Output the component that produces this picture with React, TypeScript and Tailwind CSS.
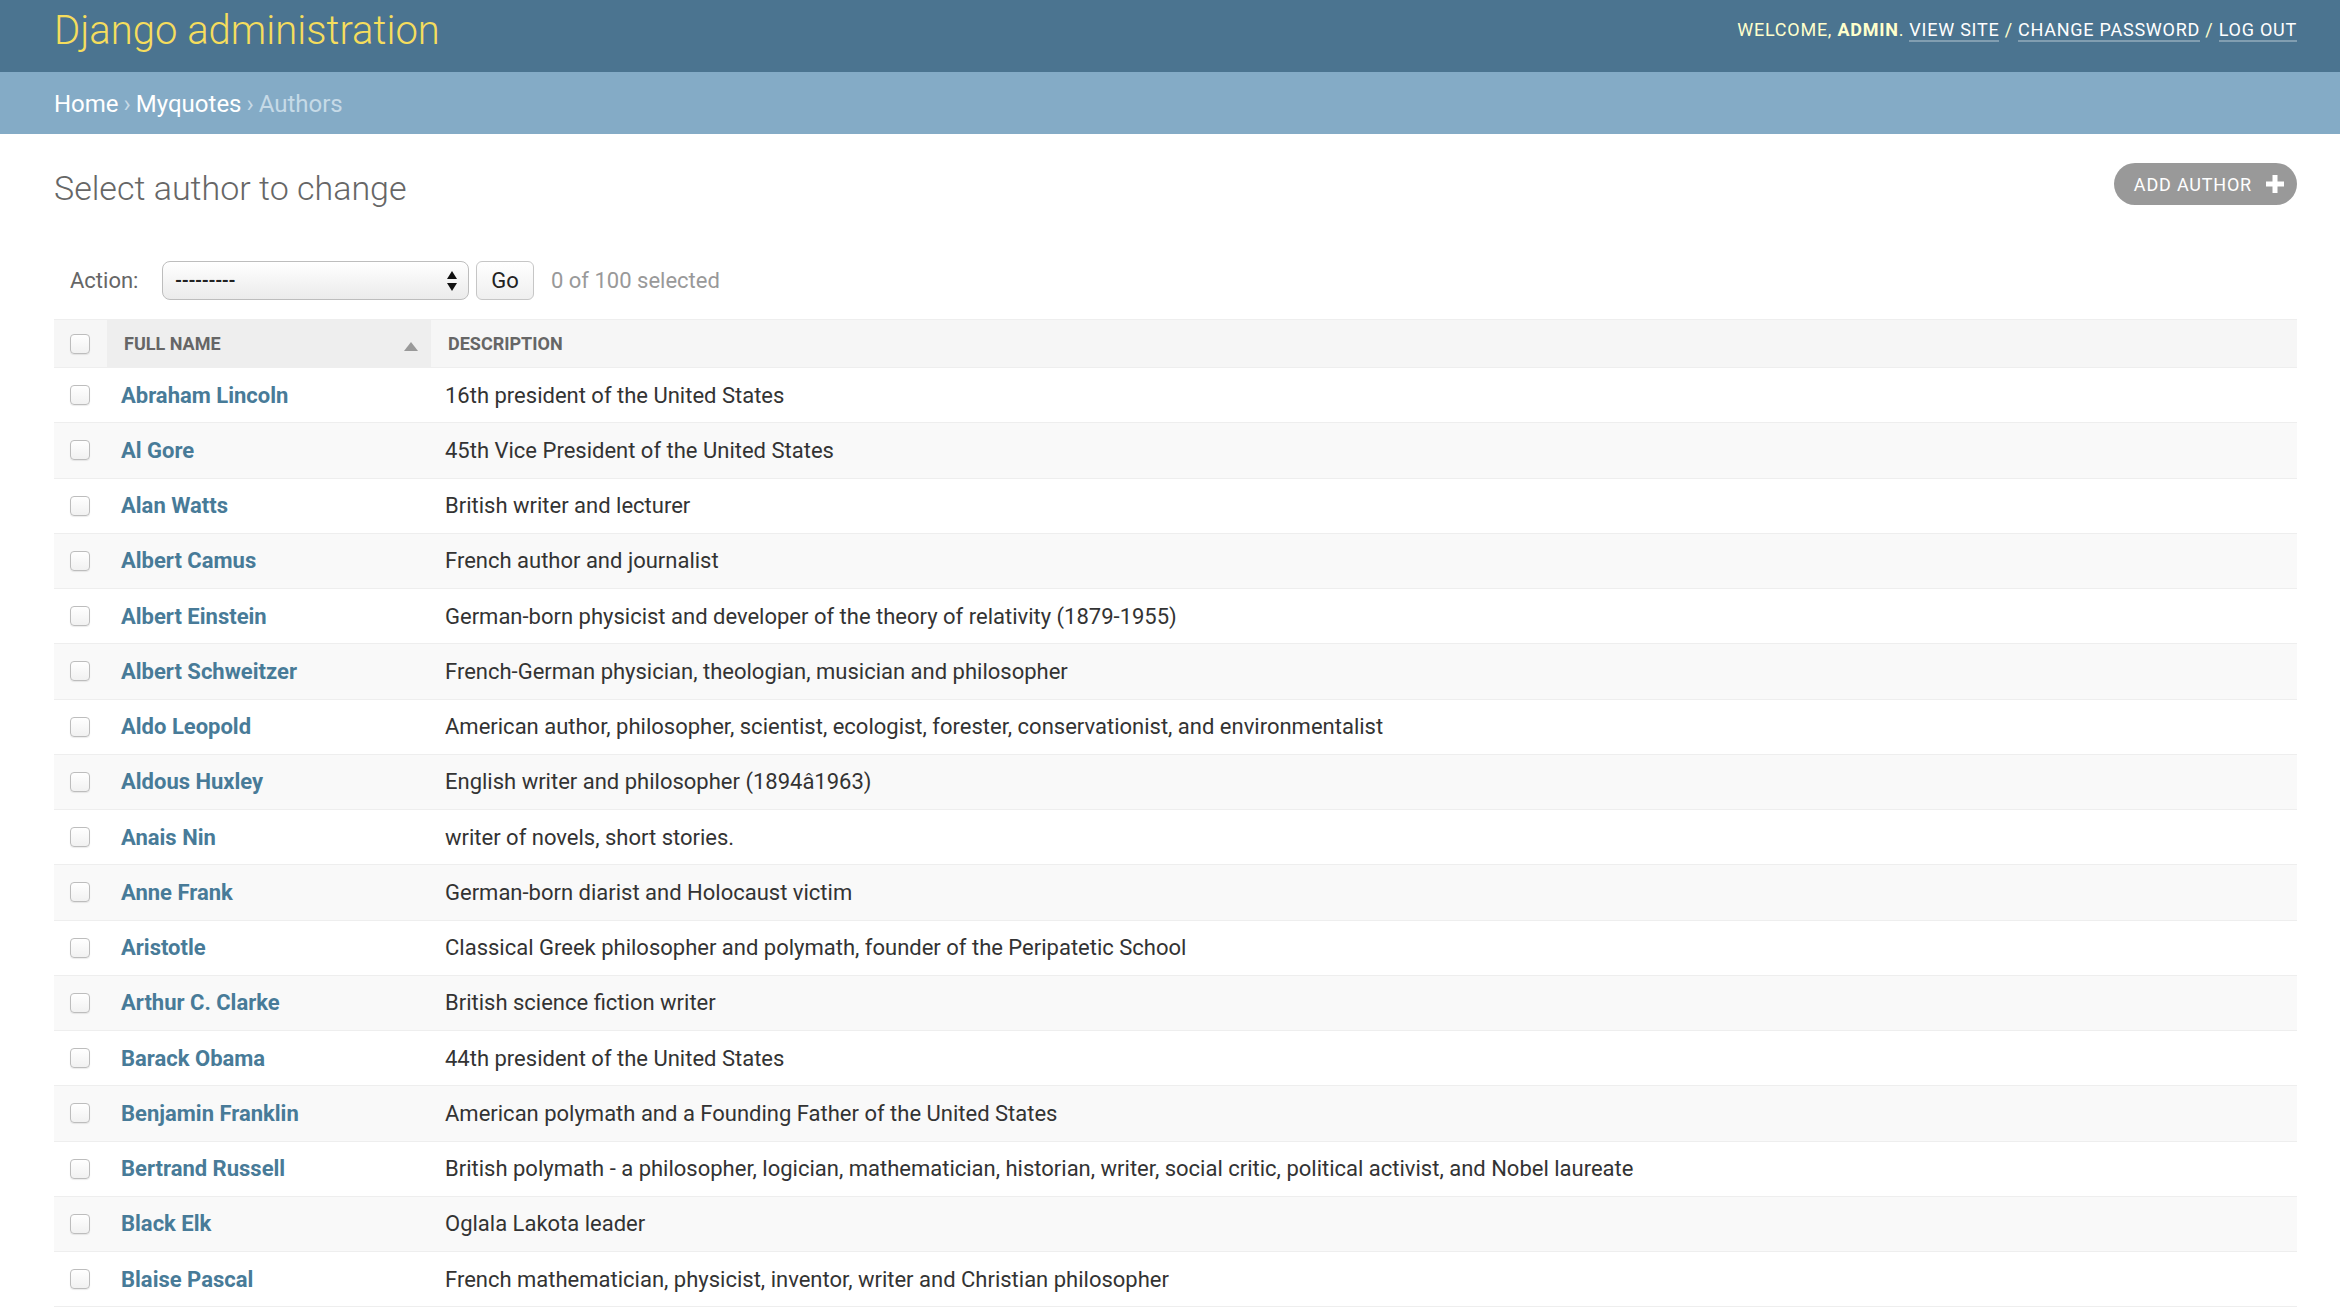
import React from 'react';

const authors: [string, string][] = [
  ['Abraham Lincoln', '16th president of the United States'],
  ['Al Gore', '45th Vice President of the United States'],
  ['Alan Watts', 'British writer and lecturer'],
  ['Albert Camus', 'French author and journalist'],
  ['Albert Einstein', 'German-born physicist and developer of the theory of relativity (1879-1955)'],
  ['Albert Schweitzer', 'French-German physician, theologian, musician and philosopher'],
  ['Aldo Leopold', 'American author, philosopher, scientist, ecologist, forester, conservationist, and environmentalist'],
  ['Aldous Huxley', 'English writer and philosopher (1894â1963)'],
  ['Anais Nin', 'writer of novels, short stories.'],
  ['Anne Frank', 'German-born diarist and Holocaust victim'],
  ['Aristotle', 'Classical Greek philosopher and polymath, founder of the Peripatetic School'],
  ['Arthur C. Clarke', 'British science fiction writer'],
  ['Barack Obama', '44th president of the United States'],
  ['Benjamin Franklin', 'American polymath and a Founding Father of the United States'],
  ['Bertrand Russell', 'British polymath - a philosopher, logician, mathematician, historian, writer, social critic, political activist, and Nobel laureate'],
  ['Black Elk', 'Oglala Lakota leader'],
  ['Blaise Pascal', 'French mathematician, physicist, inventor, writer and Christian philosopher'],
];

const Checkbox: React.FC = () => (
  <div className="w-[20px] h-[20px] rounded-[4px] border border-[#bdbdbd] bg-linear-to-b from-white to-[#f1f1f1] shadow-[0_1px_1px_rgba(0,0,0,0.08)]" />
);

const App: React.FC = () => {
  return (
    <div className="h-[1312px] overflow-hidden bg-white text-[#333]" style={{ fontFamily: 'Roboto, "Liberation Sans", sans-serif' }}>
      {/* header */}
      <div className="h-[72px] bg-[#4b7490] pl-[54px] pr-[43px] flex justify-between items-start">
        <h1 className="mt-[11px] text-[40px] leading-[40px] font-light text-[#f5dd5d]">Django administration</h1>
        <div className="mt-[18px] text-[18px] leading-[24px] uppercase tracking-[0.75px] text-[#ffc]">
          Welcome, <strong className="font-bold">admin</strong>.{' '}
          <a className="text-white border-b-[2px] border-white/30">View site</a> /{' '}
          <a className="text-white border-b-[2px] border-white/30">Change password</a> /{' '}
          <a className="text-white border-b-[2px] border-white/30">Log out</a>
        </div>
      </div>

      {/* breadcrumbs */}
      <div className="h-[62px] bg-[#84abc6] pl-[54px] pt-[2px] flex items-center text-[24px] text-[#c6dae7]">
        <a className="text-white">Home</a>
        <span className="mx-[5px]">›</span>
        <a className="text-white">Myquotes</a>
        <span className="mx-[5px]">›</span>
        <span>Authors</span>
      </div>

      {/* content */}
      <div className="pl-[54px] pr-[43px] pt-[29px]">
        <div className="flex justify-between items-start">
          <h2 className="mt-[5px] text-[34px] leading-[40px] font-light text-[#666]">Select author to change</h2>
          <a className="h-[42px] pl-[20px] pr-[13px] rounded-full bg-[#999] text-white flex items-center gap-[14px] text-[18px] uppercase tracking-[0.8px]">
            Add author
            <svg width="18" height="18" viewBox="0 0 18 18">
              <path d="M6.5 0h5v6.5H18v5h-6.5V18h-5v-6.5H0v-5h6.5z" fill="#fff" />
            </svg>
          </a>
        </div>

        {/* actions */}
        <div className="mt-[53px] h-[39px] flex items-center text-[22px]">
          <label className="w-[108px] pl-[16px] text-[#666]">Action:</label>
          <div className="w-[307px] h-[39px] rounded-[8px] border border-[#bdbdbd] bg-linear-to-b from-white to-[#ebebeb] shadow-[inset_0_1px_0_#fff] flex items-center justify-between pl-[12px] pr-[10px]">
            <span className="text-[18px] font-bold tracking-[-0.4px] text-[#222] leading-none">---------</span>
            <svg width="12" height="22" viewBox="0 0 12 22">
              <path d="M6 1l5 8H1z" fill="#111" />
              <path d="M6 21l5-8H1z" fill="#111" />
            </svg>
          </div>
          <button className="ml-[7px] w-[58px] h-[39px] rounded-[6px] border border-[#c6c6c6] bg-linear-to-b from-white to-[#efefef] text-[22px] text-[#222]">
            Go
          </button>
          <span className="ml-[17px] text-[#999]">0 of 100 selected</span>
        </div>

        {/* table */}
        <div className="mt-[19px]">
          <div className="h-[49px] grid grid-cols-[53px_324px_1fr] bg-[#f6f6f6] border-t border-b border-[#eee] text-[18px] font-bold uppercase text-[#666]">
            <div className="flex items-center pl-[16px]">
              <Checkbox />
            </div>
            <div className="bg-[#eee] flex items-center justify-between pl-[17px] pr-[13px]">
              <span>Full name</span>
              <svg width="14" height="9" viewBox="0 0 14 9" className="mt-[6px]">
                <path d="M7 0l7 9H0z" fill="#999" />
              </svg>
            </div>
            <div className="flex items-center pl-[17px]">Description</div>
          </div>

          {authors.map(([name, desc], idx) => (
            <div
              key={name}
              className={
                'h-[55.25px] grid grid-cols-[53px_324px_1fr] border-b border-[#eee] text-[22px] ' +
                (idx % 2 === 1 ? 'bg-[#f9f9f9]' : 'bg-white')
              }
            >
              <div className="flex items-center pl-[16px]">
                <Checkbox />
              </div>
              <div className="flex items-center pl-[14px]">
                <a className="font-bold text-[#487b98]">{name}</a>
              </div>
              <div className="flex items-center pl-[14px] whitespace-nowrap">{desc}</div>
            </div>
          ))}
        </div>
      </div>
    </div>
  );
};

export default App;
